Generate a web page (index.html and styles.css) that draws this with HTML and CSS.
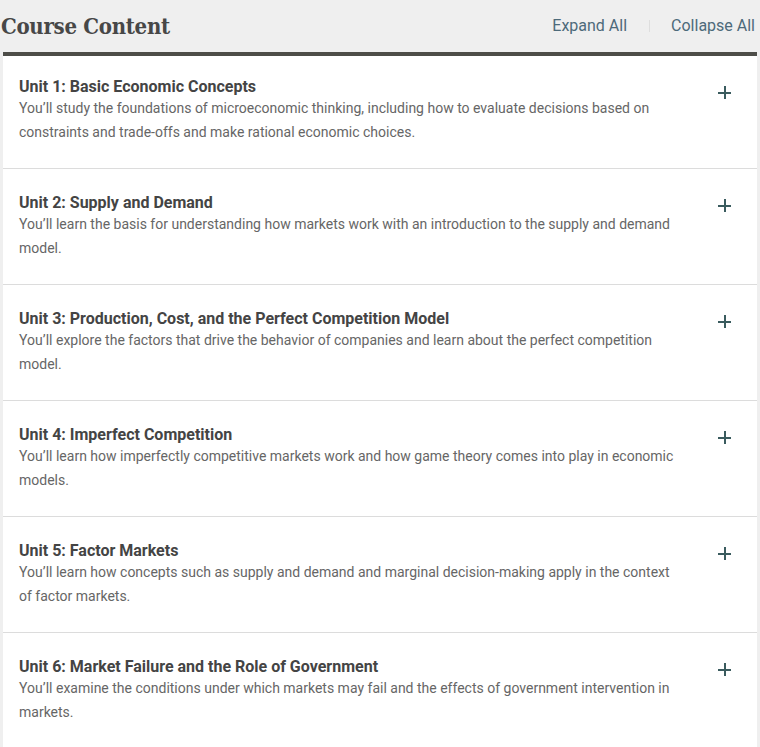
FILE: index.html
```html
<!DOCTYPE html>
<html lang="en">
<head>
<meta charset="utf-8">
<title>Course Content</title>
<link rel="stylesheet" href="styles.css">
</head>
<body>
<div class="page">
  <header class="head">
    <h2 class="title">Course Content</h2>
    <div class="actions">
      <a class="act">Expand All</a>
      <span class="sep"></span>
      <a class="act">Collapse All</a>
    </div>
  </header>
  <ul class="units">
    <li class="unit">
      <div class="text">
        <h3 class="u-title">Unit 1: Basic Economic Concepts</h3>
        <p class="u-desc">You’ll study the foundations of microeconomic thinking, including how to evaluate decisions based on constraints and trade-offs and make rational economic choices.</p>
      </div>
      <span class="plus"></span>
    </li>
    <li class="unit">
      <div class="text">
        <h3 class="u-title">Unit 2: Supply and Demand</h3>
        <p class="u-desc">You’ll learn the basis for understanding how markets work with an introduction to the supply and demand model.</p>
      </div>
      <span class="plus"></span>
    </li>
    <li class="unit">
      <div class="text">
        <h3 class="u-title">Unit 3: Production, Cost, and the Perfect Competition Model</h3>
        <p class="u-desc">You’ll explore the factors that drive the behavior of companies and learn about the perfect competition model.</p>
      </div>
      <span class="plus"></span>
    </li>
    <li class="unit">
      <div class="text">
        <h3 class="u-title">Unit 4: Imperfect Competition</h3>
        <p class="u-desc">You’ll learn how imperfectly competitive markets work and how game theory comes into play in economic models.</p>
      </div>
      <span class="plus"></span>
    </li>
    <li class="unit">
      <div class="text">
        <h3 class="u-title">Unit 5: Factor Markets</h3>
        <p class="u-desc">You’ll learn how concepts such as supply and demand and marginal decision-making apply in the context of factor markets.</p>
      </div>
      <span class="plus"></span>
    </li>
    <li class="unit">
      <div class="text">
        <h3 class="u-title">Unit 6: Market Failure and the Role of Government</h3>
        <p class="u-desc">You’ll examine the conditions under which markets may fail and the effects of government intervention in markets.</p>
      </div>
      <span class="plus"></span>
    </li>
  </ul>
</div>
</body>
</html>
```
FILE: styles.css
```css
* { box-sizing: border-box; }
html, body { margin: 0; padding: 0; }
body {
  background: #efefef;
  font-family: Roboto, "Liberation Sans", sans-serif;
  width: 760px;
  height: 747px;
  overflow: hidden;
}
.page { padding: 0 3px; }
.head {
  height: 52px;
  display: flex;
  align-items: flex-start;
  justify-content: space-between;
  margin: 0 -3px;
}
.title {
  margin: 12px 0 0 1px;
  font-family: "DejaVu Serif", "Liberation Serif", serif;
  font-stretch: condensed;
  font-weight: bold;
  font-size: 22px;
  line-height: 28px;
  color: #474747;
  letter-spacing: -0.3px;
}
.actions {
  display: flex;
  align-items: center;
  margin-top: 15px;
  margin-right: 5px;
}
.act {
  font-size: 16px;
  line-height: 22px;
  color: #4d6a7a;
}
.sep {
  width: 1px;
  height: 12px;
  background: #dedede;
  margin: 0 21px 0 22px;
}
.units {
  list-style: none;
  margin: 0;
  padding: 0;
  border-top: 4px solid #4d4d48;
  background: #ffffff;
}
.unit {
  display: flex;
  align-items: flex-start;
  border-bottom: 1px solid #dcdcdc;
  padding: 0 26px 24px 16px;
}
.text {
  flex: 1;
  padding-top: 25px;
  margin-right: 38px;
}
.unit:first-child .text { padding-top: 22px; }
.u-title {
  margin: 0;
  font-size: 16px;
  line-height: 18px;
  font-weight: bold;
  color: #444444;
}
.u-desc {
  margin: 0;
  font-size: 14px;
  line-height: 24px;
  color: #666666;
}
.plus {
  position: relative;
  flex: none;
  width: 13px;
  height: 13px;
  margin-top: 30px;
}
.plus::before, .plus::after {
  content: "";
  position: absolute;
  background: #3a5b5e;
}
.plus::before { left: 0; right: 0; top: 5.5px; height: 2px; }
.plus::after { top: 0; bottom: 0; left: 5.5px; width: 2px; }
```
